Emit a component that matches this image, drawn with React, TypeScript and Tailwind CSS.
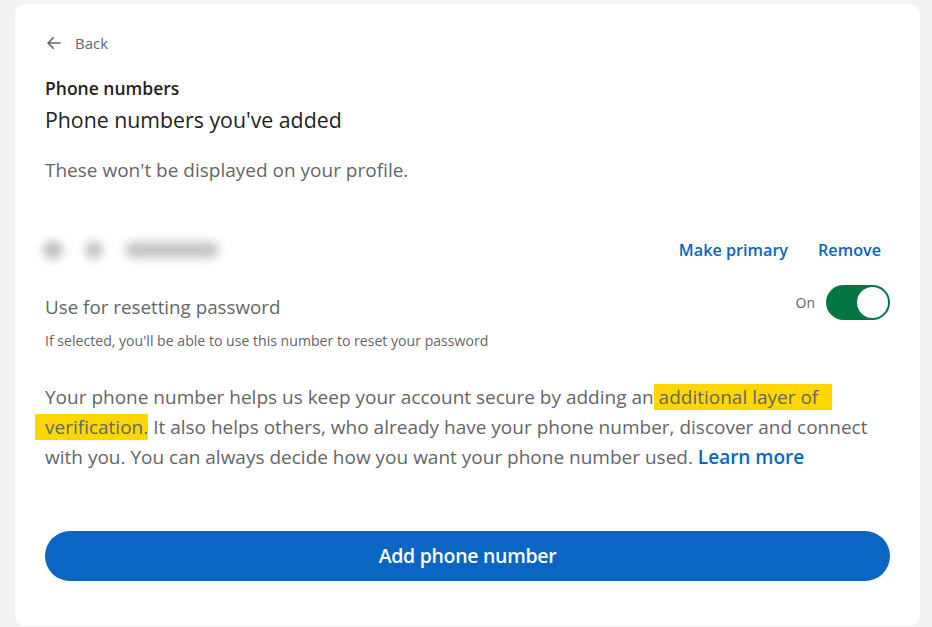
import { useState } from 'react';

function BackArrow() {
  return (
    <svg width="18" height="18" viewBox="0 0 24 24" fill="none" aria-hidden="true">
      <path d="M20 12H5M11 5l-7 7 7 7" stroke="#666666" strokeWidth="2.2" strokeLinecap="round" strokeLinejoin="round" />
    </svg>
  );
}

function Toggle({ on, onChange }: { on: boolean; onChange: () => void }) {
  return (
    <button
      type="button"
      onClick={onChange}
      aria-pressed={on}
      className={
        on
          ? 'flex h-[35px] w-[64px] items-center justify-end rounded-full bg-[#057642] p-[2px]'
          : 'flex h-[35px] w-[64px] items-center justify-start rounded-full bg-[#666666] p-[2px]'
      }
    >
      <span className="block h-[31px] w-[31px] rounded-full bg-white" />
    </button>
  );
}

export default function App() {
  const [resetOn, setResetOn] = useState(true);

  return (
    <div className="min-h-[627px] bg-[#f3f3f3] pl-[15px] pr-[12px] pt-[4px] font-['Segoe_UI','Open_Sans',sans-serif] text-[#666666]">
      <div className="rounded-[10px] bg-white pb-[45px] pl-[30px] pr-[30px] pt-[29px]">
        <button type="button" className="flex items-center gap-[12px] text-[15px] leading-[20px] text-[#666666]">
          <BackArrow />
          <span>Back</span>
        </button>

        <h1 className="mt-[25px] text-[17.5px] font-semibold leading-[20px] text-[#1f1f1f]">Phone numbers</h1>
        <h2 className="mt-[8px] text-[21.3px] leading-[28px] text-[#1f1f1f]">Phone numbers you've added</h2>
        <p className="mt-[23px] text-[19px] leading-[26px] text-[#666666]">These won't be displayed on your profile.</p>

        <div className="mt-[55px] flex h-[24px] items-center justify-between">
          <div className="h-[24px] w-[200px]" aria-hidden="true">
            <div className="ml-[-2px] flex h-full items-center blur-[5px]">
              <span className="h-[18px] w-[20px] rounded-full bg-[#bdbdbd]" />
              <span className="ml-[22px] h-[18px] w-[18px] rounded-full bg-[#c2c2c2]" />
              <span className="ml-[22px] h-[16px] w-[94px] rounded-full bg-[#c4c4c4]" />
            </div>
          </div>
          <div className="mr-[9px] flex items-center gap-[30px] text-[16.2px] font-semibold text-[#0a66c2]">
            <a href="#">Make primary</a>
            <a href="#">Remove</a>
          </div>
        </div>

        <div className="mt-[23px] flex items-start justify-between">
          <div>
            <p className="mt-[9px] text-[18.8px] leading-[26px]">Use for resetting password</p>
            <p className="mt-[12px] text-[14.1px] leading-[18px]">If selected, you'll be able to use this number to reset your password</p>
          </div>
          <div className="flex items-center gap-[11px]">
            <span className="text-[14px]">On</span>
            <Toggle on={resetOn} onChange={() => setResetOn(!resetOn)} />
          </div>
        </div>

        <p className="mt-[32px] text-[19px] leading-[30px] text-[#666666]">
          Your phone number helps us keep your account secure by adding an
          <mark className="bg-[#ffd700] pr-[4px] text-[#666666]">&nbsp;additional layer of&nbsp;&nbsp;</mark>{' '}
          <mark className="ml-[-10px] bg-[#ffd700] pl-[10px] text-[#666666]">verification.</mark> It also helps others, who already have your phone number, discover and connect with you. You can always decide how you want your phone number used.{' '}
          <a href="#" className="font-semibold text-[#0a66c2]">Learn more</a>
        </p>

        <button
          type="button"
          className="mt-[59px] flex h-[50px] w-full items-center justify-center rounded-full bg-[#0a66c2] text-[19.5px] font-semibold tracking-[-0.3px] text-white"
        >
          Add phone number
        </button>
      </div>
    </div>
  );
}
